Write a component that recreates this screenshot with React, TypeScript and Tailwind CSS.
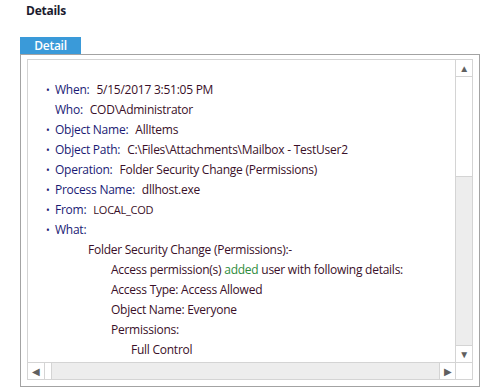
import React from "react"

const font = { fontFamily: '"Open Sans", "Noto Sans", sans-serif' }

function Row({ bullet = true, label, value, small = false }: { bullet?: boolean; label: string; value?: string; small?: boolean }) {
    return (
        <div className="flex items-center h-[20px] whitespace-nowrap">
            <span className="w-[9px] text-[#1c1c78] text-[10px]">{bullet ? "•" : ""}</span>
            <span className="text-[#1a1a74]">{label}</span>
            {value && (
                <span className={`ml-[7px] text-[#3a1029] ${small ? "text-[11px]" : ""}`}>{value}</span>
            )}
        </div>
    )
}

export default function App() {
    return (
        <div className="w-[500px] h-[390px] bg-white overflow-hidden tracking-[-0.25px]" style={font}>
            <div className="pl-[26px] pt-[2px] h-[37px] text-[12px] font-bold text-[#1b1b2e]">Details</div>
            <div className="ml-[20px] w-[61px] h-[17px] bg-[#3a9ad9] text-white text-[12px] font-semibold flex items-center justify-center">
                Detail
            </div>
            <div className="ml-[20px] w-[460px] h-[333px] border border-[#a3a3a3] pt-[4px] px-[6px] pb-[6px]">
                <div className="w-full h-full border border-[#d4d4d4] flex flex-col">
                    <div className="flex flex-1 min-h-0">
                        <div className="flex-1 pl-[18px] pt-[20px] text-[12px] text-[#3a1029] overflow-hidden">
                            <Row label="When:" value="5/15/2017 3:51:05 PM" />
                            <Row bullet={false} label="Who:" value="COD\Administrator" />
                            <Row label="Object Name:" value="AllItems" />
                            <Row label="Object Path:" value="C:\Files\Attachments\Mailbox - TestUser2" />
                            <Row label="Operation:" value="Folder Security Change (Permissions)" />
                            <Row label="Process Name:" value="dllhost.exe" />
                            <Row label="From:" value="LOCAL_COD" small />
                            <Row label="What:" />
                            <div className="h-[20px] flex items-center pl-[42px] whitespace-nowrap">Folder Security Change (Permissions):-</div>
                            <div className="h-[20px] flex items-center pl-[65px] whitespace-nowrap">
                                Access permission(s)&nbsp;<span className="text-[#2e8b3c]">added</span>&nbsp;user with following details:
                            </div>
                            <div className="h-[20px] flex items-center pl-[65px] whitespace-nowrap">Access Type: Access Allowed</div>
                            <div className="h-[20px] flex items-center pl-[65px] whitespace-nowrap">Object Name: Everyone</div>
                            <div className="h-[20px] flex items-center pl-[65px] whitespace-nowrap">Permissions:</div>
                            <div className="h-[20px] flex items-center pl-[85px] whitespace-nowrap">Full Control</div>
                        </div>
                        <div className="w-[17px] flex flex-col bg-[#ededed] border-l border-[#d4d4d4]">
                            <div className="h-[17px] bg-white border-b border-[#d4d4d4] flex items-center justify-center text-[#606060] text-[10px]">▲</div>
                            <div className="h-[100px] bg-white border-b border-[#d4d4d4]" />
                            <div className="flex-1" />
                            <div className="h-[17px] bg-white border-t border-[#d4d4d4] flex items-center justify-center text-[#606060] text-[10px]">▼</div>
                        </div>
                    </div>
                    <div className="h-[17px] flex border-t border-[#d4d4d4]">
                        <div className="flex-1 flex bg-[#ededed]">
                            <div className="w-[16px] bg-white flex items-center justify-center text-[#606060] text-[10px]">◀</div>
                            <div className="w-[8px] bg-white border-x border-[#d4d4d4]" />
                            <div className="flex-1" />
                            <div className="w-[16px] bg-white border-l border-[#d4d4d4] flex items-center justify-center text-[#606060] text-[10px]">▶</div>
                        </div>
                        <div className="w-[17px] bg-white border-l border-[#d4d4d4]" />
                    </div>
                </div>
            </div>
        </div>
    )
}
